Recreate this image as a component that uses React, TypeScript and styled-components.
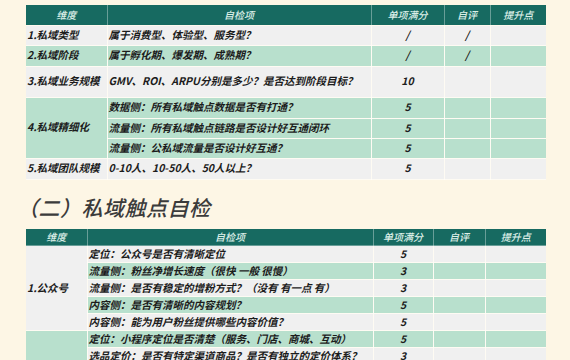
import styled, { createGlobalStyle } from "styled-components";

const GlobalStyle = createGlobalStyle`
    html, body {
        margin: 0;
        padding: 0;
        background: #FDF6E5;
    }
    body {
        font-family: "Noto Sans CJK SC", "Noto Sans", sans-serif;
        color: #1c1c1c;
    }
`;

type Row = {
    dim?: string;
    span?: number;
    item: string;
    score: string;
    self?: string;
    tone: "gray" | "green";
    dimTone?: "gray" | "green";
    height: number;
};

const firstRows: Row[] = [
    { dim: "1.私域类型", item: "属于消费型、体验型、服务型？", score: "/", self: "/", tone: "gray", height: 20 },
    { dim: "2.私域阶段", item: "属于孵化期、爆发期、成熟期？", score: "/", self: "/", tone: "green", height: 21 },
    { dim: "3.私域业务规模", item: "GMV、ROI、ARPU分别是多少？是否达到阶段目标？", score: "10", tone: "gray", height: 31 },
    { dim: "4.私域精细化", span: 3, item: "数据侧：所有私域触点数据是否有打通？", score: "5", tone: "green", height: 21 },
    { item: "流量侧：所有私域触点链路是否设计好互通闭环", score: "5", tone: "green", height: 20 },
    { item: "流量侧：公私域流量是否设计好互通？", score: "5", tone: "green", height: 20 },
    { dim: "5.私域团队规模", item: "0-10人、10-50人、50人以上？", score: "5", tone: "gray", height: 21 },
];

const secondRows: Row[] = [
    { dim: "1.公众号", span: 5, dimTone: "gray", item: "定位：公众号是否有清晰定位", score: "5", tone: "gray", height: 17 },
    { item: "流量侧：粉丝净增长速度（很快 一般 很慢）", score: "3", tone: "green", height: 17 },
    { item: "流量侧：是否有稳定的增粉方式？（没有 有一点 有）", score: "3", tone: "gray", height: 17 },
    { item: "内容侧：是否有清晰的内容规划？", score: "5", tone: "green", height: 17 },
    { item: "内容侧：能为用户粉丝提供哪些内容价值？", score: "5", tone: "gray", height: 17 },
    { dim: "", span: 2, dimTone: "green", item: "定位：小程序定位是否清楚（服务、门店、商城、互动）", score: "5", tone: "green", height: 17 },
    { item: "选品定价：是否有特定渠道商品？是否有独立的定价体系？", score: "3", tone: "gray", height: 17 },
];

function CheckTable({ widths, rows, headHeight }: { widths: number[]; rows: Row[]; headHeight: number }) {
    return (
        <Table>
            <colgroup>
                {widths.map((w, i) => (
                    <col key={i} style={{ width: w }} />
                ))}
            </colgroup>
            <thead>
                <tr style={{ height: headHeight }}>
                    <HeadCell>维度</HeadCell>
                    <HeadCell>自检项</HeadCell>
                    <HeadCell>单项满分</HeadCell>
                    <HeadCell>自评</HeadCell>
                    <HeadCell>提升点</HeadCell>
                </tr>
            </thead>
            <tbody>
                {rows.map((r, i) => (
                    <tr key={i} style={{ height: r.height }}>
                        {r.dim !== undefined && (
                            <DimCell rowSpan={r.span || 1} $tone={r.dimTone || r.tone}>
                                {r.dim}
                            </DimCell>
                        )}
                        <ItemCell $tone={r.tone}>{r.item}</ItemCell>
                        <MidCell $tone={r.tone}>{r.score}</MidCell>
                        <MidCell $tone={r.tone}>{r.self || ""}</MidCell>
                        <MidCell $tone={r.tone}></MidCell>
                    </tr>
                ))}
            </tbody>
        </Table>
    );
}

export default function App() {
    return (
        <Page>
            <GlobalStyle />
            <CheckTable widths={[81, 264, 73, 46, 56]} headHeight={20} rows={firstRows} />
            <SectionTitle>（二）私域触点自检</SectionTitle>
            <CheckTable widths={[61, 286, 60, 52, 61]} headHeight={17} rows={secondRows} />
        </Page>
    );
}

const Page = styled.div`
    width: 570px;
    height: 360px;
    overflow: hidden;
    padding: 5px 24px 0 26px;
    box-sizing: border-box;
`;

const Table = styled.table`
    width: 520px;
    table-layout: fixed;
    border-collapse: collapse;
    font-size: 10.5px;
    font-style: italic;
    font-weight: 600;
    line-height: 1;
`;

const HeadCell = styled.th`
    background: #176A61;
    color: #dcefe8;
    font-weight: 500;
    font-size: 10px;
    text-align: center;
    padding: 0;
    border: 1px solid rgba(255, 255, 255, 0.35);
    border-top: none;
    &:first-child { border-left: none; }
    &:last-child { border-right: none; }
`;

const toneColor = (t: "gray" | "green") => (t === "green" ? "#B8E0CD" : "#F0F0F0");

const Cell = styled.td<{ $tone: "gray" | "green" }>`
    background: ${(p) => toneColor(p.$tone)};
    padding: 0 1px;
    white-space: nowrap;
    overflow: hidden;
    border: 1px solid rgba(255, 255, 255, 0.55);
    &:last-child { border-right: none; }
`;

const DimCell = styled(Cell)`
    text-align: left;
    border-left: none;
`;

const ItemCell = styled(Cell)`
    text-align: left;
`;

const MidCell = styled(Cell)`
    text-align: center;
`;

const SectionTitle = styled.h2`
    margin: 17px 0 11px -9px;
    font-size: 21px;
    line-height: 21px;
    font-weight: 500;
    font-style: italic;
    color: #3b3b3b;
    letter-spacing: 0.5px;
`;
